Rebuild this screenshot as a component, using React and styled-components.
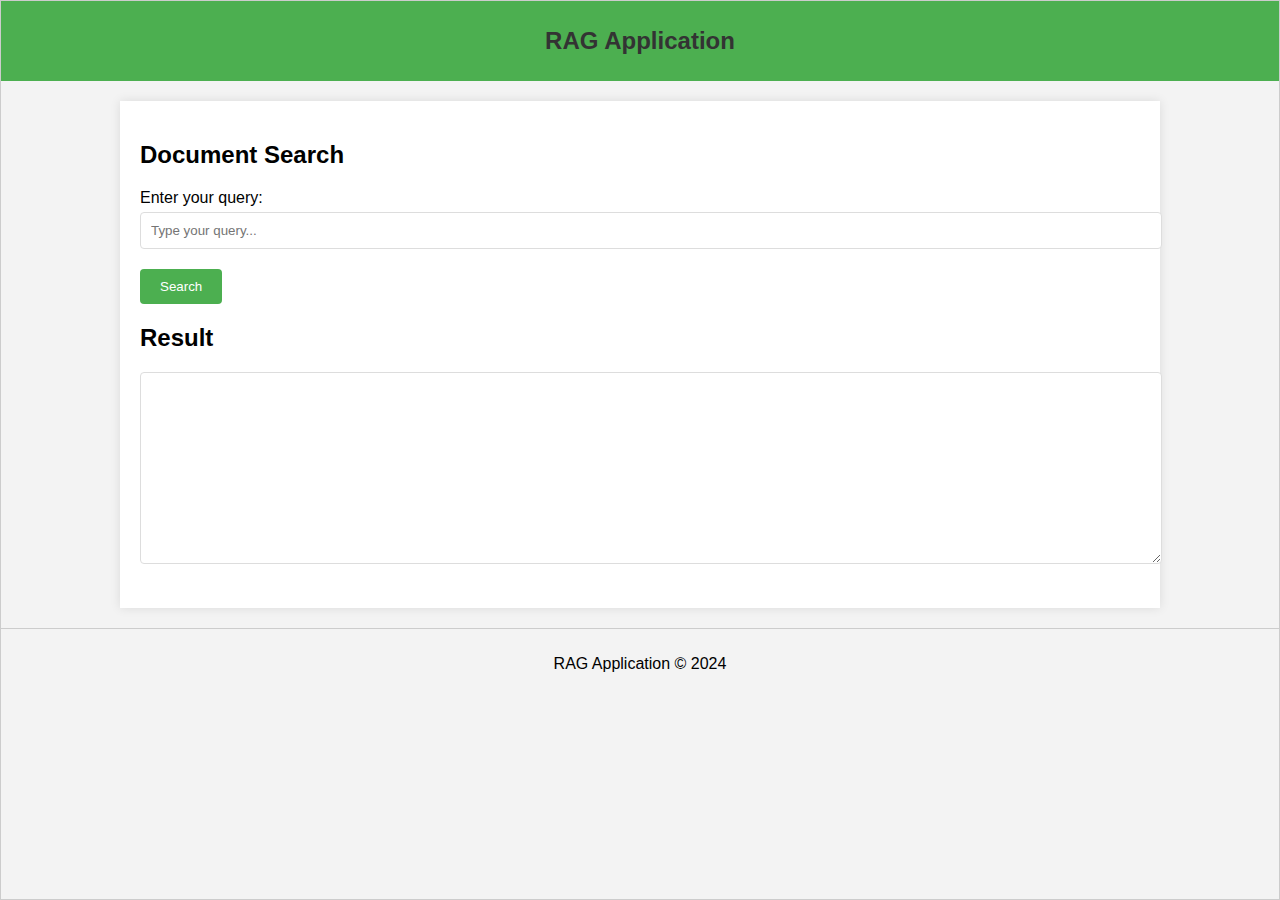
import React, { useState } from 'react'
import styled, { createGlobalStyle } from 'styled-components'

const GlobalStyle = createGlobalStyle`
  html, body {
    margin: 0;
    padding: 0;
    background: #f3f3f3;
    font-family: "Liberation Sans", Arial, sans-serif;
  }
`

const Page = styled.div`
  min-height: 100vh;
  box-sizing: border-box;
  border: 1px solid #cccccc;
  background: #f3f3f3;
`

const Header = styled.header`
  background: #4caf50;
  padding: 20px;
  text-align: center;
`

const Title = styled.h1`
  margin: 0;
  font-size: 24px;
  line-height: 40px;
  font-weight: bold;
  color: #333333;
`

const Main = styled.main`
  width: 1000px;
  margin: 20px auto;
  padding: 20px;
  background: #ffffff;
  box-shadow: 0 0 10px rgba(0, 0, 0, 0.1);
`

const SectionTitle = styled.h2`
  margin: 19.92px 0;
  font-size: 24px;
  color: #000000;
`

const Label = styled.label`
  display: block;
  font-size: 16px;
  line-height: 18px;
  margin-bottom: 5px;
  color: #000000;
`

const QueryInput = styled.input`
  display: block;
  width: 100%;
  padding: 10px;
  font-family: inherit;
  font-size: 13.33px;
  border: 1px solid #dddddd;
  border-radius: 4px;
  outline: none;

  &::placeholder {
    color: #757575;
  }
`

const Button = styled.button`
  margin-top: 20px;
  padding: 10px 20px;
  font-family: inherit;
  font-size: 13.33px;
  line-height: 15px;
  color: #ffffff;
  background: #4caf50;
  border: none;
  border-radius: 4px;
  cursor: pointer;
`

const ResultArea = styled.textarea`
  display: block;
  width: 100%;
  height: 170px;
  padding: 10px;
  margin-bottom: 24px;
  font-family: inherit;
  font-size: 13.33px;
  border: 1px solid #dddddd;
  border-radius: 4px;
  outline: none;
`

const Footer = styled.footer`
  border-top: 1px solid #cccccc;
  padding: 10px;
  text-align: center;

  p {
    margin: 16px 0;
    font-size: 16px;
    line-height: 18px;
    color: #000000;
  }
`

const App = () => {
  const [query, setQuery] = useState('')
  const [result] = useState('')

  return (
    <>
      <GlobalStyle />
      <Page>
        <Header>
          <Title>RAG Application</Title>
        </Header>
        <Main>
          <SectionTitle>Document Search</SectionTitle>
          <Label htmlFor='query'>Enter your query:</Label>
          <QueryInput
            id='query'
            type='text'
            placeholder='Type your query...'
            value={query}
            onChange={e => setQuery(e.target.value)}
          />
          <Button>Search</Button>
          <SectionTitle>Result</SectionTitle>
          <ResultArea readOnly value={result} />
        </Main>
        <Footer>
          <p>RAG Application © 2024</p>
        </Footer>
      </Page>
    </>
  )
}

export default App
